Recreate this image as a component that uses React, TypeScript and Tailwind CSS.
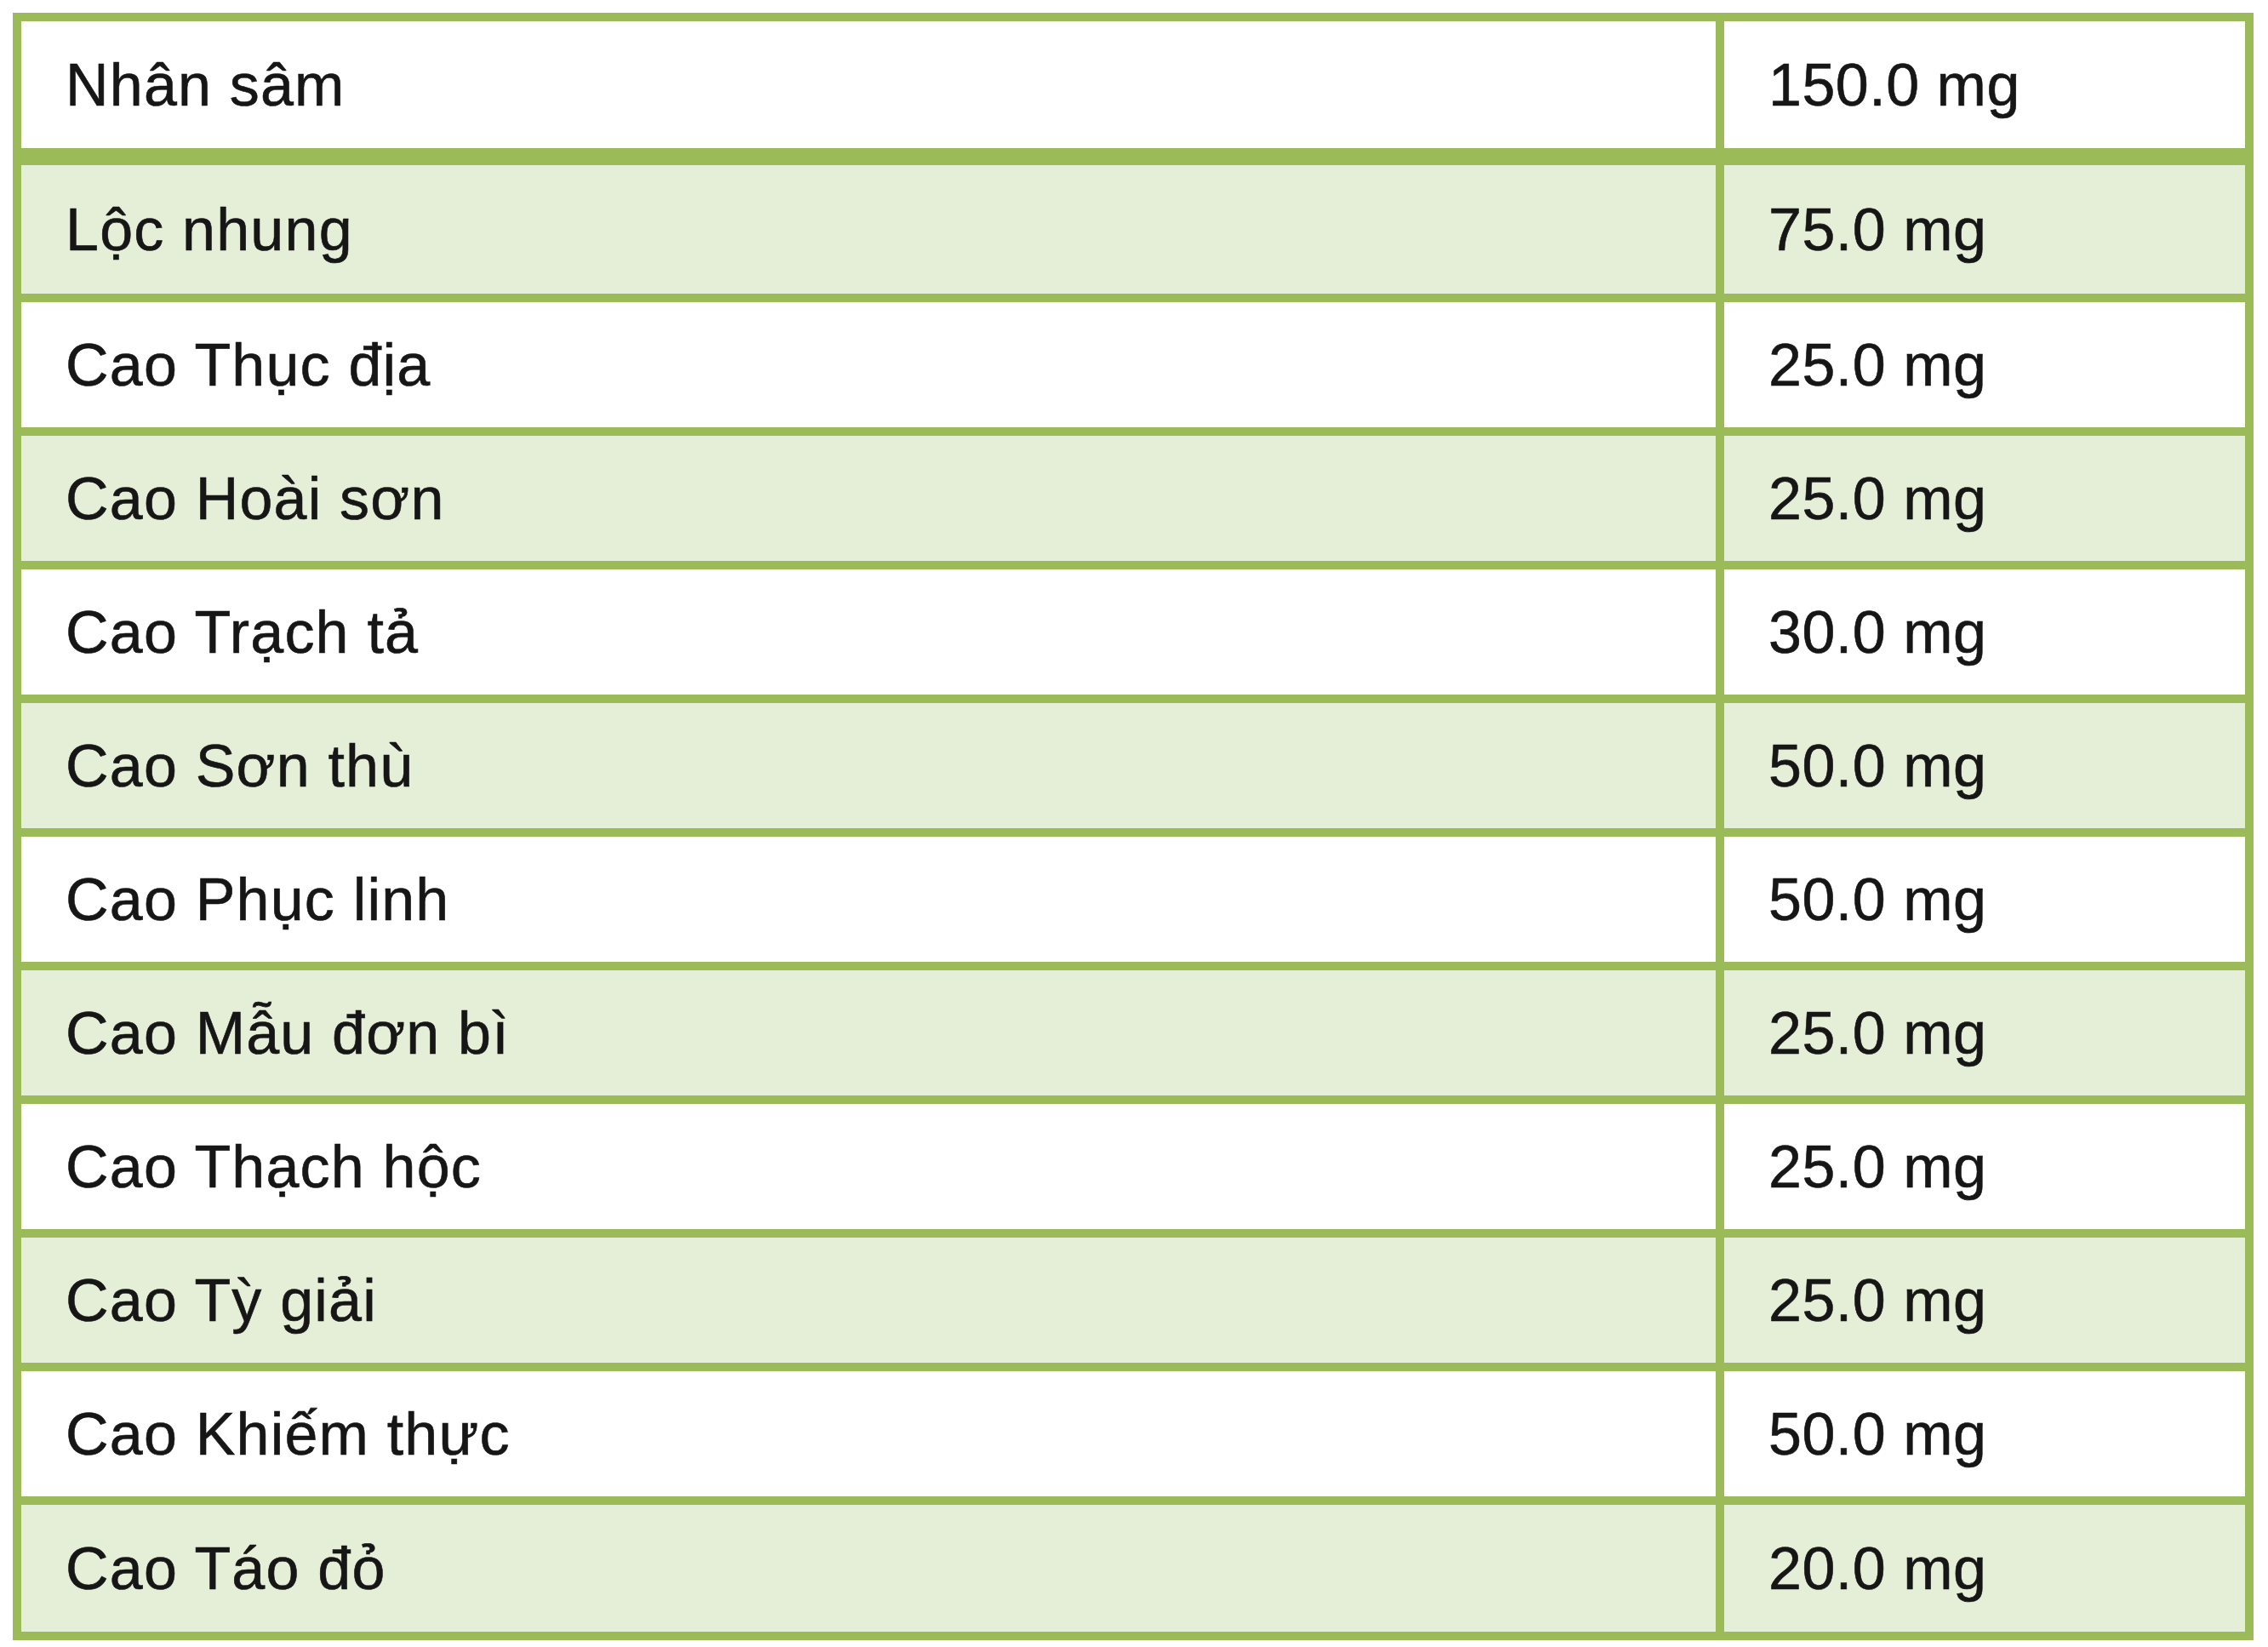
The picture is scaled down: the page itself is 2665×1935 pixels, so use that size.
const rows = [
  { name: 'Lộc nhung', amount: '75.0 mg' },
  { name: 'Cao Thục địa', amount: '25.0 mg' },
  { name: 'Cao Hoài sơn', amount: '25.0 mg' },
  { name: 'Cao Trạch tả', amount: '30.0 mg' },
  { name: 'Cao Sơn thù', amount: '50.0 mg' },
  { name: 'Cao Phục linh', amount: '50.0 mg' },
  { name: 'Cao Mẫu đơn bì', amount: '25.0 mg' },
  { name: 'Cao Thạch hộc', amount: '25.0 mg' },
  { name: 'Cao Tỳ giải', amount: '25.0 mg' },
  { name: 'Cao Khiếm thực', amount: '50.0 mg' },
  { name: 'Cao Táo đỏ', amount: '20.0 mg' },
];

const rowHeight = (i: number) => {
  if (i === 0) return 'h-[161px] border-b-[10px] border-[#9bbb59]';
  if (i === rows.length - 1) return 'h-[149px]';
  return 'h-[157px] border-b-[10px] border-[#9bbb59]';
};

const App = () => {
  return (
    <div className="min-h-[1935px] bg-white pt-[15px] pl-[15px] font-['Liberation_Sans',Arial,sans-serif] text-[70px] leading-none text-[#161616] [-webkit-text-stroke:0.6px_#161616]">
      <div className="w-[2633px] border-[10px] border-[#9bbb59]">
        {/* header row */}
        <div className="flex h-[169px] border-b-[20px] border-[#9bbb59] bg-white">
          <div className="flex w-[1991px] items-center pl-[52px] tracking-[1.2px]">Nhân sâm</div>
          <div className="flex flex-1 items-center border-l-[10px] border-[#9bbb59] pl-[52px] tracking-[0.5px]">150.0 mg</div>
        </div>
        {rows.map((row, i) => (
          <div key={row.name} className={`flex ${rowHeight(i)} ${i % 2 === 0 ? 'bg-[#e5eed7]' : 'bg-white'}`}>
            <div className="flex w-[1991px] items-center pl-[52px] tracking-[1.2px]">{row.name}</div>
            <div className="flex flex-1 items-center border-l-[10px] border-[#9bbb59] pl-[52px] tracking-[0.5px]">{row.amount}</div>
          </div>
        ))}
      </div>
    </div>
  );
};

export default App;
